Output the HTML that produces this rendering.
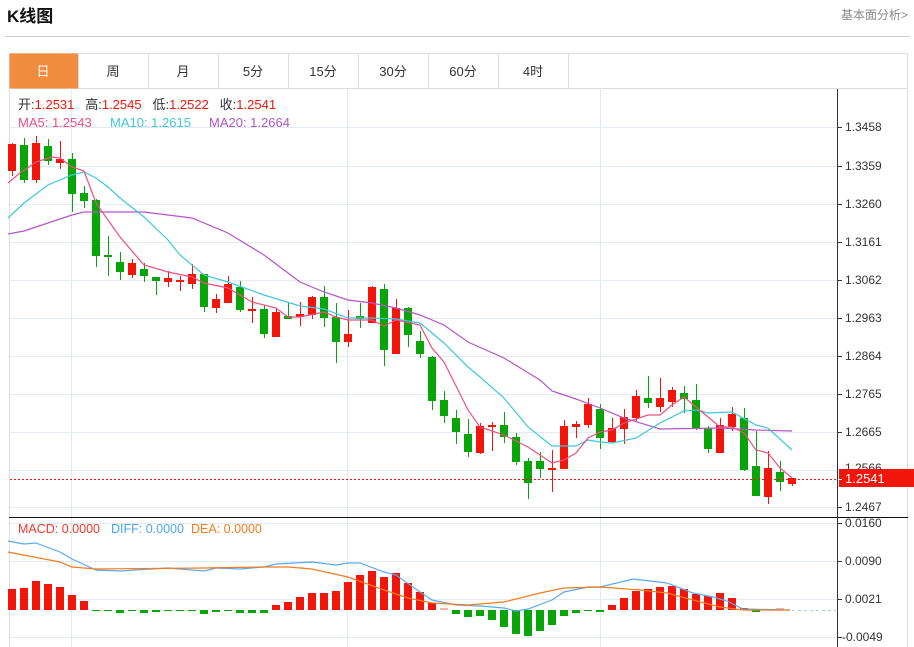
<!DOCTYPE html>
<html><head><meta charset="utf-8"><style>
html,body{margin:0;padding:0;background:#fff;width:914px;height:647px;overflow:hidden}
svg{display:block;font-family:"Liberation Sans","Noto Sans CJK SC",sans-serif}
</style></head><body>
<svg width="914" height="647" viewBox="0 0 914 647" xmlns="http://www.w3.org/2000/svg">
<text x="7" y="22" font-size="17" font-weight="bold" fill="#111">K线图</text>
<text x="908" y="19" font-size="12" fill="#888" text-anchor="end">基本面分析&gt;</text>
<line x1="5" y1="36.5" x2="910" y2="36.5" stroke="#ccc"/>
<!-- tabs -->
<rect x="9.5" y="53.5" width="898" height="35" fill="#fff" stroke="#ddd"/>
<rect x="9.5" y="53.5" width="69" height="35" fill="#f28c3e"/>
<g stroke="#ddd"><line x1="78.5" y1="53" x2="78.5" y2="88"/><line x1="148.5" y1="53" x2="148.5" y2="88"/><line x1="218.5" y1="53" x2="218.5" y2="88"/><line x1="288.5" y1="53" x2="288.5" y2="88"/><line x1="358.5" y1="53" x2="358.5" y2="88"/><line x1="428.5" y1="53" x2="428.5" y2="88"/><line x1="498.5" y1="53" x2="498.5" y2="88"/><line x1="568.5" y1="53" x2="568.5" y2="88"/></g>
<g font-size="13" text-anchor="middle" fill="#333">
<text x="43" y="76" fill="#fff">日</text><text x="113" y="76">周</text><text x="183" y="76">月</text><text x="253" y="76">5分</text><text x="323" y="76">15分</text><text x="393" y="76">30分</text><text x="463" y="76">60分</text><text x="533" y="76">4时</text>
</g>
<!-- frame -->
<line x1="9.5" y1="88" x2="9.5" y2="647" stroke="#ddd"/>
<line x1="907.5" y1="88" x2="907.5" y2="647" stroke="#ddd"/>
<!-- grid -->
<g stroke="#e3eaf0">
<line x1="10" y1="127.5" x2="837" y2="127.5"/><line x1="10" y1="166.5" x2="837" y2="166.5"/><line x1="10" y1="204.5" x2="837" y2="204.5"/><line x1="10" y1="242.5" x2="837" y2="242.5"/><line x1="10" y1="280.5" x2="837" y2="280.5"/><line x1="10" y1="318.5" x2="837" y2="318.5"/><line x1="10" y1="356.5" x2="837" y2="356.5"/><line x1="10" y1="394.5" x2="837" y2="394.5"/><line x1="10" y1="432.5" x2="837" y2="432.5"/><line x1="10" y1="470.5" x2="837" y2="470.5"/><line x1="10" y1="507.5" x2="837" y2="507.5"/>
<line x1="10" y1="523.5" x2="837" y2="523.5"/><line x1="10" y1="561.5" x2="837" y2="561.5"/><line x1="10" y1="599.5" x2="837" y2="599.5"/><line x1="10" y1="637.5" x2="837" y2="637.5"/>
<line x1="71.5" y1="89" x2="71.5" y2="647"/><line x1="347.5" y1="89" x2="347.5" y2="647"/><line x1="600.5" y1="89" x2="600.5" y2="647"/>
</g>
<!-- axis -->
<line x1="837.5" y1="89" x2="837.5" y2="647" stroke="#333"/>
<line x1="9" y1="517.5" x2="908" y2="517.5" stroke="#111"/>
<g font-size="12" fill="#333" stroke="none">
<text x="845" y="131">1.3458</text><text x="845" y="170">1.3359</text><text x="845" y="208">1.3260</text><text x="845" y="246">1.3161</text><text x="845" y="284">1.3062</text><text x="845" y="322">1.2963</text><text x="845" y="360">1.2864</text><text x="845" y="398">1.2765</text><text x="845" y="436">1.2665</text><text x="845" y="472">1.2566</text><text x="845" y="511">1.2467</text>
<text x="845" y="527">0.0160</text><text x="845" y="565">0.0090</text><text x="845" y="603">0.0021</text><text x="842" y="641">-0.0049</text>
</g>
<g stroke="#333"><line x1="838" y1="127.5" x2="842" y2="127.5"/><line x1="838" y1="166.5" x2="842" y2="166.5"/><line x1="838" y1="204.5" x2="842" y2="204.5"/><line x1="838" y1="242.5" x2="842" y2="242.5"/><line x1="838" y1="280.5" x2="842" y2="280.5"/><line x1="838" y1="318.5" x2="842" y2="318.5"/><line x1="838" y1="356.5" x2="842" y2="356.5"/><line x1="838" y1="394.5" x2="842" y2="394.5"/><line x1="838" y1="432.5" x2="842" y2="432.5"/><line x1="838" y1="507.5" x2="842" y2="507.5"/><line x1="838" y1="523.5" x2="842" y2="523.5"/><line x1="838" y1="561.5" x2="842" y2="561.5"/><line x1="838" y1="599.5" x2="842" y2="599.5"/><line x1="838" y1="637.5" x2="842" y2="637.5"/></g>
<!-- candles -->
<g id="c"></g>
<g>
<!-- red -->
<g fill="#f2150a" stroke="#f2150a">
<line x1="12.5" y1="143" x2="12.5" y2="176"/><rect x="8" y="144" width="8" height="27" stroke="none"/>
<line x1="36.5" y1="136" x2="36.5" y2="183"/><rect x="32" y="143" width="8" height="37" stroke="none"/>
<line x1="60.5" y1="141" x2="60.5" y2="169"/><rect x="56" y="159" width="8" height="4" stroke="none"/>
<line x1="132.5" y1="259" x2="132.5" y2="278"/><rect x="128" y="263" width="8" height="12" stroke="none"/>
<line x1="168.5" y1="271" x2="168.5" y2="287"/><rect x="164" y="278" width="8" height="4" stroke="none"/>
<line x1="180.5" y1="276" x2="180.5" y2="291"/><rect x="176" y="280" width="8" height="2" stroke="none"/>
<line x1="192.5" y1="264" x2="192.5" y2="289"/><rect x="188" y="274" width="8" height="10" stroke="none"/>
<line x1="216.5" y1="294" x2="216.5" y2="313"/><rect x="212" y="299" width="8" height="9" stroke="none"/>
<line x1="228.5" y1="276" x2="228.5" y2="303"/><rect x="224" y="284" width="8" height="19" stroke="none"/>
<line x1="252.5" y1="297" x2="252.5" y2="323"/><rect x="248" y="309" width="8" height="2" stroke="none"/>
<line x1="276.5" y1="308" x2="276.5" y2="337"/><rect x="272" y="312" width="8" height="25" stroke="none"/>
<line x1="300.5" y1="302" x2="300.5" y2="326"/><rect x="296" y="314" width="8" height="3" stroke="none"/>
<line x1="312.5" y1="296" x2="312.5" y2="319"/><rect x="308" y="297" width="8" height="18" stroke="none"/>
<line x1="348.5" y1="310" x2="348.5" y2="347"/><rect x="344" y="334" width="8" height="8" stroke="none"/>
<line x1="372.5" y1="286" x2="372.5" y2="323"/><rect x="368" y="287" width="8" height="36" stroke="none"/>
<line x1="396.5" y1="299" x2="396.5" y2="354"/><rect x="392" y="308" width="8" height="46" stroke="none"/>
<line x1="480.5" y1="423" x2="480.5" y2="454"/><rect x="476" y="426" width="8" height="27" stroke="none"/>
<line x1="492.5" y1="422" x2="492.5" y2="451"/><rect x="488" y="425" width="8" height="2" stroke="none"/>
<line x1="552.5" y1="450" x2="552.5" y2="492"/><rect x="548" y="468" width="8" height="2" stroke="none"/>
<line x1="564.5" y1="420" x2="564.5" y2="469"/><rect x="560" y="426" width="8" height="43" stroke="none"/>
<line x1="576.5" y1="421" x2="576.5" y2="438"/><rect x="572" y="424" width="8" height="3" stroke="none"/>
<line x1="588.5" y1="398" x2="588.5" y2="428"/><rect x="584" y="404" width="8" height="21" stroke="none"/>
<line x1="612.5" y1="418" x2="612.5" y2="443"/><rect x="608" y="428" width="8" height="14" stroke="none"/>
<line x1="624.5" y1="409" x2="624.5" y2="444"/><rect x="620" y="417" width="8" height="12" stroke="none"/>
<line x1="636.5" y1="390" x2="636.5" y2="421"/><rect x="632" y="396" width="8" height="22" stroke="none"/>
<line x1="660.5" y1="378" x2="660.5" y2="412"/><rect x="656" y="398" width="8" height="9" stroke="none"/>
<line x1="672.5" y1="387" x2="672.5" y2="407"/><rect x="668" y="390" width="8" height="12" stroke="none"/>
<line x1="720.5" y1="418" x2="720.5" y2="453"/><rect x="716" y="425" width="8" height="28" stroke="none"/>
<line x1="732.5" y1="407" x2="732.5" y2="431"/><rect x="728" y="414" width="8" height="13" stroke="none"/>
<line x1="768.5" y1="451" x2="768.5" y2="504"/><rect x="764" y="468" width="8" height="29" stroke="none"/>
<line x1="792.5" y1="478" x2="792.5" y2="486"/><rect x="788" y="478" width="8" height="6" stroke="none"/>
</g>
<g fill="#08a508" stroke="#08a508">
<line x1="24.5" y1="138" x2="24.5" y2="183"/><rect x="20" y="145" width="8" height="35" stroke="none"/>
<line x1="48.5" y1="139" x2="48.5" y2="165"/><rect x="44" y="146" width="8" height="15" stroke="none"/>
<line x1="72.5" y1="153" x2="72.5" y2="212"/><rect x="68" y="159" width="8" height="35" stroke="none"/>
<line x1="84.5" y1="186" x2="84.5" y2="208"/><rect x="80" y="193" width="8" height="8" stroke="none"/>
<line x1="96.5" y1="199" x2="96.5" y2="267"/><rect x="92" y="200" width="8" height="56" stroke="none"/>
<line x1="108.5" y1="236" x2="108.5" y2="276"/><rect x="104" y="255" width="8" height="2" stroke="none"/>
<line x1="120.5" y1="252" x2="120.5" y2="280"/><rect x="116" y="262" width="8" height="10" stroke="none"/>
<line x1="144.5" y1="263" x2="144.5" y2="282"/><rect x="140" y="269" width="8" height="7" stroke="none"/>
<line x1="156.5" y1="277" x2="156.5" y2="295"/><rect x="152" y="277" width="8" height="4" stroke="none"/>
<line x1="204.5" y1="274" x2="204.5" y2="312"/><rect x="200" y="274" width="8" height="33" stroke="none"/>
<line x1="240.5" y1="281" x2="240.5" y2="312"/><rect x="236" y="287" width="8" height="23" stroke="none"/>
<line x1="264.5" y1="305" x2="264.5" y2="338"/><rect x="260" y="309" width="8" height="25" stroke="none"/>
<line x1="288.5" y1="303" x2="288.5" y2="319"/><rect x="284" y="316" width="8" height="3" stroke="none"/>
<line x1="324.5" y1="286" x2="324.5" y2="327"/><rect x="320" y="297" width="8" height="21" stroke="none"/>
<line x1="336.5" y1="303" x2="336.5" y2="363"/><rect x="332" y="317" width="8" height="25" stroke="none"/>
<line x1="360.5" y1="303" x2="360.5" y2="328"/><rect x="356" y="316" width="8" height="3" stroke="none"/>
<line x1="384.5" y1="284" x2="384.5" y2="366"/><rect x="380" y="289" width="8" height="61" stroke="none"/>
<line x1="408.5" y1="307" x2="408.5" y2="347"/><rect x="404" y="308" width="8" height="27" stroke="none"/>
<line x1="420.5" y1="331" x2="420.5" y2="358"/><rect x="416" y="341" width="8" height="13" stroke="none"/>
<line x1="432.5" y1="356" x2="432.5" y2="410"/><rect x="428" y="357" width="8" height="44" stroke="none"/>
<line x1="444.5" y1="391" x2="444.5" y2="423"/><rect x="440" y="400" width="8" height="16" stroke="none"/>
<line x1="456.5" y1="410" x2="456.5" y2="444"/><rect x="452" y="418" width="8" height="14" stroke="none"/>
<line x1="468.5" y1="419" x2="468.5" y2="457"/><rect x="464" y="434" width="8" height="18" stroke="none"/>
<line x1="504.5" y1="412" x2="504.5" y2="443"/><rect x="500" y="425" width="8" height="12" stroke="none"/>
<line x1="516.5" y1="433" x2="516.5" y2="465"/><rect x="512" y="437" width="8" height="25" stroke="none"/>
<line x1="528.5" y1="458" x2="528.5" y2="499"/><rect x="524" y="461" width="8" height="22" stroke="none"/>
<line x1="540.5" y1="452" x2="540.5" y2="478"/><rect x="536" y="461" width="8" height="8" stroke="none"/>
<line x1="600.5" y1="404" x2="600.5" y2="449"/><rect x="596" y="409" width="8" height="29" stroke="none"/>
<line x1="648.5" y1="376" x2="648.5" y2="408"/><rect x="644" y="398" width="8" height="5" stroke="none"/>
<line x1="684.5" y1="386" x2="684.5" y2="413"/><rect x="680" y="393" width="8" height="6" stroke="none"/>
<line x1="696.5" y1="384" x2="696.5" y2="430"/><rect x="692" y="400" width="8" height="28" stroke="none"/>
<line x1="708.5" y1="426" x2="708.5" y2="453"/><rect x="704" y="428" width="8" height="21" stroke="none"/>
<line x1="744.5" y1="408" x2="744.5" y2="471"/><rect x="740" y="418" width="8" height="52" stroke="none"/>
<line x1="756.5" y1="431" x2="756.5" y2="496"/><rect x="752" y="466" width="8" height="30" stroke="none"/>
<line x1="780.5" y1="461" x2="780.5" y2="491"/><rect x="776" y="472" width="8" height="10" stroke="none"/>
</g>
</g>
<!-- MA lines -->
<g fill="none" stroke-width="1.2">
<polyline stroke="#b356c6" points="8,234 24,231 48,223 72,215 84,212 120,212 144,212 168,215 192,218 228,233 264,255 288,273 300,282 324,292 348,300 372,303 396,308 420,315 444,325 468,342 504,358 540,380 552,391 576,399 600,408 624,418 660,429 720,428 756,430 792,431"/>
<polyline stroke="#3ec7dc" points="8,218 24,203 48,185 72,175 84,172 96,178 108,187 120,198 144,217 168,240 180,255 204,275 228,282 264,295 300,306 324,309 348,318 372,318 396,319 420,323 444,343 468,367 480,377 504,398 528,427 552,446 576,446 588,440 600,442 612,443 636,438 660,423 684,411 696,410 708,413 732,412 756,425 768,428 792,450"/>
<polyline stroke="#ee4f80" points="8,183 20,173 36,162 52,157 60,158 72,167 84,171 96,203 120,237 144,265 168,272 192,277 204,283 228,288 252,302 276,308 288,317 300,317 324,312 336,317 348,320 372,320 384,326 396,320 420,325 432,348 444,362 468,410 480,427 504,435 528,447 552,463 564,460 576,453 588,438 600,432 612,430 624,423 648,415 660,415 672,405 684,397 696,407 708,417 720,427 732,427 744,433 756,450 768,453 780,468 792,478"/>
</g>
<!-- current price -->
<line x1="10" y1="479.5" x2="837" y2="479.5" stroke="#f2150a" stroke-dasharray="2,2"/>
<rect x="839" y="469" width="75" height="18" fill="#f2150a"/>
<line x1="838" y1="479.5" x2="842" y2="479.5" stroke="#fff"/>
<text x="845" y="483" font-size="13" fill="#fff">1.2541</text>
<!-- info -->
<g font-size="13">
<text x="18" y="109" fill="#333">开:<tspan fill="#f2150a">1.2531</tspan>&#160;&#160;&#160;高:<tspan fill="#f2150a">1.2545</tspan>&#160;&#160;&#160;低:<tspan fill="#f2150a">1.2522</tspan>&#160;&#160;&#160;收:<tspan fill="#f2150a">1.2541</tspan></text>
<text x="18" y="127" fill="#ee4f80">MA5: 1.2543</text>
<text x="110" y="127" fill="#3ec7dc">MA10: 1.2615</text>
<text x="209" y="127" fill="#b356c6">MA20: 1.2664</text>
</g>
<g font-size="12.5">
<text x="18" y="533" fill="#f2382a">MACD: 0.0000</text>
<text x="111" y="533" fill="#4ba6ef">DIFF: 0.0000</text>
<text x="191" y="533" fill="#f47b20">DEA: 0.0000</text>
</g>
<!-- MACD bars -->
<g fill="#f2150a">
<rect x="8" y="589" width="8" height="21"/><rect x="20" y="588" width="8" height="22"/><rect x="32" y="581" width="8" height="29"/><rect x="44" y="584" width="8" height="26"/><rect x="56" y="587" width="8" height="23"/><rect x="68" y="595" width="8" height="15"/><rect x="80" y="601" width="8" height="9"/>
<rect x="272" y="605" width="8" height="5"/><rect x="284" y="602" width="8" height="8"/><rect x="296" y="597" width="8" height="13"/><rect x="308" y="593" width="8" height="17"/><rect x="320" y="593" width="8" height="17"/><rect x="332" y="591" width="8" height="19"/><rect x="344" y="582" width="8" height="28"/><rect x="356" y="575" width="8" height="35"/><rect x="368" y="571" width="8" height="39"/><rect x="380" y="577" width="8" height="33"/><rect x="392" y="573" width="8" height="37"/><rect x="404" y="583" width="8" height="27"/><rect x="416" y="592" width="8" height="18"/><rect x="428" y="603" width="8" height="7"/><rect x="440" y="608" width="8" height="2" fill="#f8b0a8"/>
<rect x="608" y="605" width="8" height="5"/><rect x="620" y="598" width="8" height="12"/><rect x="632" y="591" width="8" height="19"/><rect x="644" y="589" width="8" height="21"/><rect x="656" y="587" width="8" height="23"/><rect x="668" y="586" width="8" height="24"/><rect x="680" y="589" width="8" height="21"/><rect x="692" y="594" width="8" height="16"/><rect x="704" y="596" width="8" height="14"/><rect x="716" y="593" width="8" height="17"/><rect x="728" y="598" width="8" height="12"/><rect x="740" y="608" width="8" height="2"/><rect x="776" y="608" width="8" height="2" fill="#f8b0a8"/>
</g>
<g fill="#08a508">
<rect x="92" y="610" width="8" height="1"/><rect x="104" y="610" width="8" height="1"/><rect x="116" y="610" width="8" height="3"/><rect x="128" y="610" width="8" height="1"/><rect x="140" y="610" width="8" height="3"/><rect x="152" y="610" width="8" height="2"/><rect x="164" y="610" width="8" height="1"/><rect x="176" y="610" width="8" height="1"/><rect x="188" y="610" width="8" height="1"/><rect x="200" y="610" width="8" height="4"/><rect x="212" y="610" width="8" height="2"/><rect x="224" y="610" width="8" height="1"/><rect x="236" y="610" width="8" height="3"/><rect x="248" y="610" width="8" height="3"/><rect x="260" y="610" width="8" height="3"/>
<rect x="452" y="610" width="8" height="4"/><rect x="464" y="610" width="8" height="7"/><rect x="476" y="610" width="8" height="6"/><rect x="488" y="610" width="8" height="10"/><rect x="500" y="610" width="8" height="17"/><rect x="512" y="610" width="8" height="24"/><rect x="524" y="610" width="8" height="26"/><rect x="536" y="610" width="8" height="21"/><rect x="548" y="610" width="8" height="15"/><rect x="560" y="610" width="8" height="6"/><rect x="572" y="610" width="8" height="3"/><rect x="584" y="610" width="8" height="1"/><rect x="596" y="610" width="8" height="2"/>
<rect x="752" y="610" width="8" height="2"/>
</g>
<line x1="792" y1="610.5" x2="836" y2="610.5" stroke="#9fd4ee" stroke-dasharray="3,3"/>
<g fill="none" stroke-width="1.2">
<polyline stroke="#5aaaf0" points="8,541 24,544 36,543 60,552 72,559 96,570 120,571 168,568 204,571 216,568 240,569 264,567 276,564 312,562 336,565 348,563 360,563 384,572 396,575 420,592 432,600 456,605 480,606 504,608 516,611 528,609 552,600 564,592 588,587 600,587 633,579 667,583 693,593 713,597 727,601 743,609 790,610"/>
<polyline stroke="#f47b20" points="8,552 60,562 72,567 96,569 204,568 264,567 288,567 312,569 348,577 384,590 408,598 432,603 468,605 504,602 540,593 564,588 600,587 640,590 667,593 693,600 720,607 743,610 790,610"/>
</g>
</svg>
</body></html>
